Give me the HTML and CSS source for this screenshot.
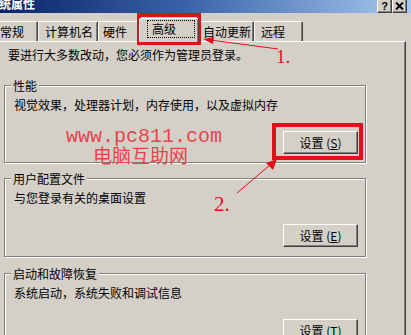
FILE: index.html
```html
<!DOCTYPE html>
<html lang="zh-CN">
<head>
<meta charset="utf-8">
<title>系统属性</title>
<link rel="stylesheet" href="styles.css">
</head>
<body>
<div class="window">
  <div class="titlebar">
    <span class="title">统属性</span>
    <div class="caption-buttons">
      <span class="cap-btn help">?</span>
      <span class="cap-btn close"><svg width="9" height="8" viewBox="0 0 9 8"><path d="M1 0.5 L8 7.5 M8 0.5 L1 7.5" stroke="#000" stroke-width="2"/></svg></span>
    </div>
  </div>
  <div class="tabs">
    <div class="tab tab-general">常规</div>
    <div class="tab tab-name">计算机名</div>
    <div class="tab tab-hw">硬件</div>
    <div class="tab tab-adv selected"><span class="focus">高级</span></div>
    <div class="tab tab-update">自动更新</div>
    <div class="tab tab-remote">远程</div>
  </div>
  <div class="panel">
    <p class="note">要进行大多数改动，您必须作为管理员登录。</p>
    <div class="group g1">
      <span class="group-title">性能</span>
      <p class="desc">视觉效果，处理器计划，内存使用，以及虚拟内存</p>
      <button class="btn">设置 (<u>S</u>)</button>
    </div>
    <div class="group g2">
      <span class="group-title">用户配置文件</span>
      <p class="desc">与您登录有关的桌面设置</p>
      <button class="btn">设置 (<u>E</u>)</button>
    </div>
    <div class="group g3">
      <span class="group-title">启动和故障恢复</span>
      <p class="desc">系统启动，系统失败和调试信息</p>
      <button class="btn">设置 (<u>T</u>)</button>
    </div>
  </div>

  <div class="wm-url">www.pc811.com</div>
  <div class="wm-name">电脑互助网</div>
  <div class="step step1">1.</div>
  <div class="step step2">2.</div>
  <svg class="marks" width="411" height="335" viewBox="0 0 411 335">
    <rect x="139" y="15" width="60" height="28" fill="none" stroke="#e0101a" stroke-width="4"/>
    <rect x="274" y="125" width="87" height="33" fill="none" stroke="#e0101a" stroke-width="4"/>
    <line x1="278" y1="49" x2="210" y2="40" stroke="#e0101a" stroke-width="1"/>
    <polygon points="203,39 214,37 213,44" fill="#e0101a"/>
    <line x1="237" y1="193" x2="270" y2="165" stroke="#e0101a" stroke-width="1"/>
    <polygon points="277,159 273,170 266,163" fill="#e0101a"/>
  </svg>
</div>
</body>
</html>
```

FILE: styles.css
```css
body {
  margin: 0;
}

.window {
  position: relative;
  width: 411px;
  height: 335px;
  overflow: hidden;
  background: #d4d0c8;
  color: #000;
  font-family: "Liberation Sans", "Noto Sans CJK SC", sans-serif;
  font-size: 12px;
  line-height: 14px;
}

/* title bar */
.titlebar {
  height: 13px;
  display: flex;
  justify-content: space-between;
  align-items: flex-start;
  background: linear-gradient(90deg, #0a246a 0%, #3a62a8 45%, #a6caf0 100%);
}

.title {
  color: #fff;
  font-weight: bold;
  font-family: "Noto Sans CJK SC", sans-serif;
  font-size: 12px;
  line-height: 12px;
  margin-left: -1px;
  margin-top: -2px;
}

.caption-buttons {
  display: flex;
  margin-right: 4px;
}

.cap-btn {
  width: 15px;
  height: 13px;
  box-sizing: border-box;
  background: #d4d0c8;
  border-right: 1px solid #404040;
  border-bottom: 1px solid #404040;
  border-left: 1px solid #fff;
  box-shadow: inset -1px -1px #808080;
  display: flex;
  align-items: center;
  justify-content: center;
  font-family: "Liberation Sans", sans-serif;
  font-weight: bold;
  font-size: 11px;
  line-height: 11px;
}

/* tabs */
.tabs {
  height: 28px;
  display: flex;
  align-items: flex-end;
  margin-left: -10px;
  font-family: "Noto Sans CJK SC", sans-serif;
}

.tab {
  height: 20px;
  box-sizing: border-box;
  border-top: 1px solid #fff;
  border-left: 1px solid #fff;
  border-right: 1px solid #404040;
  box-shadow: inset -1px 0 #808080;
  border-radius: 2px 2px 0 0;
  line-height: 19px;
  white-space: nowrap;
}

.tab-general { width: 48px; padding-left: 9px; }
.tab-name { width: 60px; padding-left: 6px; }
.tab-hw { width: 43px; padding-left: 4px; }
.tab-update { width: 57px; padding-left: 5px; }
.tab-remote { width: 49px; padding-left: 6px; }

.tab.selected {
  position: relative;
  z-index: 1;
  width: 60px;
  height: 24px;
  margin: 0 -2px -1px -2px;
  padding: 1px 0 0 7px;
  background: #d4d0c8;
}

.focus {
  display: block;
  width: 48px;
  height: 18px;
  box-sizing: border-box;
  border: 1px dotted #000;
  padding-left: 4px;
  line-height: 15px;
}

/* panel */
.panel {
  width: 406px;
  height: 300px;
  box-sizing: border-box;
  border-top: 1px solid #fff;
  border-right: 1px solid #404040;
  box-shadow: inset -1px 0 #808080;
  padding: 6px 0 0 4px;
  font-family: "Noto Sans CJK SC", sans-serif;
}

.note {
  margin: 0 0 0 4px;
  line-height: 14px;
}

.group {
  width: 362px;
  box-sizing: border-box;
  border: 1px solid #808080;
  box-shadow: inset 1px 1px #fff, 1px 1px #fff;
  padding: 0 7px 0 9px;
  display: flex;
  flex-direction: column;
}

.g1 { margin-top: 23px; height: 78px; }
.g2 { margin-top: 15px; height: 79px; }
.g3 { margin-top: 16px; height: 80px; }

.group-title {
  align-self: flex-start;
  margin: -7px 0 0 -3px;
  padding: 0 2px;
  background: #d4d0c8;
  line-height: 14px;
}

.desc {
  margin: 5px 0 0 0;
  line-height: 14px;
}

.btn {
  align-self: flex-end;
  margin-top: 19px;
  width: 75px;
  height: 23px;
  box-sizing: border-box;
  padding: 0;
  background: #d4d0c8;
  border: 1px solid;
  border-color: #fff #404040 #404040 #fff;
  box-shadow: inset -1px -1px #808080;
  font-family: "Noto Sans CJK SC", sans-serif;
  font-size: 12px;
  line-height: 14px;
  color: #000;
  white-space: nowrap;
}

/* annotations overlaid on the screenshot */
.wm-url {
  position: absolute;
  left: 66px;
  top: 130px;
  font-family: "Liberation Mono", monospace;
  font-size: 20px;
  line-height: 14px;
  color: #e4464d;
}

.wm-name {
  position: absolute;
  left: 93px;
  top: 146px;
  font-family: "Noto Sans CJK SC", sans-serif;
  font-size: 19px;
  line-height: 18px;
  color: #e8434c;
}

.step {
  position: absolute;
  font-family: "Liberation Serif", serif;
  color: #e0101a;
}

.step1 {
  left: 276px;
  top: 47px;
  font-size: 19px;
  line-height: 20px;
}

.step2 {
  left: 214px;
  top: 193px;
  font-size: 21px;
  line-height: 22px;
}

.marks {
  position: absolute;
  left: 0;
  top: 0;
  pointer-events: none;
}
```
